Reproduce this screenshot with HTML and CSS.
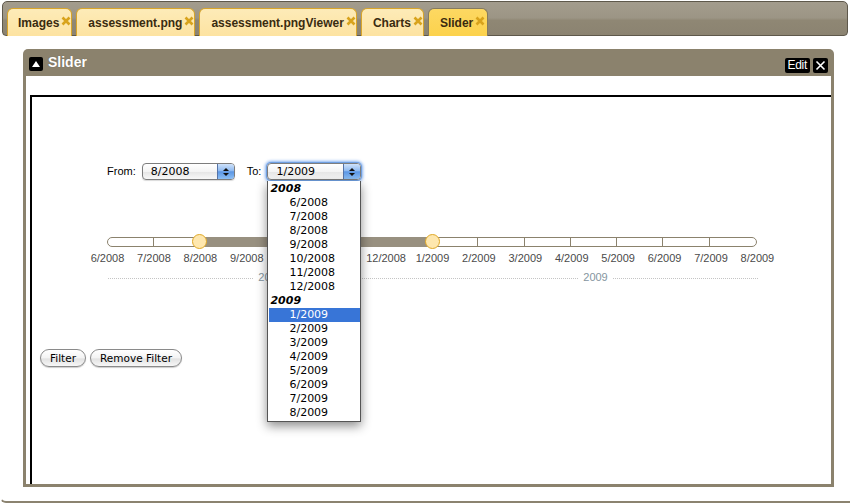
FILE: index.html
```html
<!DOCTYPE html>
<html>
<head>
<meta charset="utf-8">
<link rel="stylesheet" href="styles.css">
</head>
<body>
<div class="tabbar">
  <div class="tab">Images<svg class="x" viewBox="0 0 10 10"><path d="M1.5 1.5L8.5 8.5M8.5 1.5L1.5 8.5"/></svg></div>
  <div class="tab">assessment.png<svg class="x" viewBox="0 0 10 10"><path d="M1.5 1.5L8.5 8.5M8.5 1.5L1.5 8.5"/></svg></div>
  <div class="tab">assessment.pngViewer<svg class="x" viewBox="0 0 10 10"><path d="M1.5 1.5L8.5 8.5M8.5 1.5L1.5 8.5"/></svg></div>
  <div class="tab">Charts<svg class="x" viewBox="0 0 10 10"><path d="M1.5 1.5L8.5 8.5M8.5 1.5L1.5 8.5"/></svg></div>
  <div class="tab active">Slider<svg class="x" viewBox="0 0 10 10"><path d="M1.5 1.5L8.5 8.5M8.5 1.5L1.5 8.5"/></svg></div>
</div>
<div class="workspace">
  <div class="panel">
    <div class="panel-head">
      <span class="collapse"><svg viewBox="0 0 14 14"><path d="M3 10L7 4L11 10Z"/></svg></span>
      <span class="panel-title">Slider</span>
      <span class="spacer"></span>
      <span class="badge">Edit</span>
      <span class="badge close"><svg viewBox="0 0 15 15"><path d="M3.5 3.5L11.5 11.5M11.5 3.5L3.5 11.5"/></svg></span>
    </div>
    <div class="panel-body">
      <div class="canvas">
        <div class="range-form">
          <div class="pickers">
            <span class="label">From:</span>
            <div class="select"><span class="val">8/2008</span><span class="arrows"><i class="up"></i><i class="down"></i></span></div>
            <span class="label to">To:</span>
            <div class="select-wrap">
              <div class="select focus"><span class="val">1/2009</span><span class="arrows"><i class="up"></i><i class="down"></i></span></div>
              <div class="menu">
                <div class="group">2008</div>
                <div class="opt">6/2008</div>
                <div class="opt">7/2008</div>
                <div class="opt">8/2008</div>
                <div class="opt">9/2008</div>
                <div class="opt">10/2008</div>
                <div class="opt">11/2008</div>
                <div class="opt">12/2008</div>
                <div class="group">2009</div>
                <div class="opt sel">1/2009</div>
                <div class="opt">2/2009</div>
                <div class="opt">3/2009</div>
                <div class="opt">4/2009</div>
                <div class="opt">5/2009</div>
                <div class="opt">6/2009</div>
                <div class="opt">7/2009</div>
                <div class="opt">8/2009</div>
              </div>
            </div>
          </div>
          <div class="slider">
            <div class="rail">
              <div class="track">
                <span></span><span></span><span></span><span></span><span></span><span></span><span></span>
                <span></span><span></span><span></span><span></span><span></span><span></span><span></span>
              </div>
              <div class="fill" style="left:14.2857%;width:35.7143%"></div>
              <div class="handle" style="left:14.2857%"></div>
              <div class="handle" style="left:50%"></div>
            </div>
            <div class="ticks">
              <span>6/2008</span><span>7/2008</span><span>8/2008</span><span>9/2008</span><span>10/2008</span>
              <span>11/2008</span><span>12/2008</span><span>1/2009</span><span>2/2009</span><span>3/2009</span>
              <span>4/2009</span><span>5/2009</span><span>6/2009</span><span>7/2009</span><span>8/2009</span>
            </div>
            <div class="years">
              <div class="year"><span>2008</span></div>
              <div class="year"><span>2009</span></div>
            </div>
          </div>
        </div>
        <div class="actions">
          <button class="btn">Filter</button>
          <button class="btn">Remove Filter</button>
        </div>
      </div>
    </div>
  </div>
</div>
</body>
</html>
```

FILE: styles.css
```css
html, body {
  margin: 0;
  padding: 0;
  background: #fff;
  font-family: "Liberation Sans", Arial, sans-serif;
  overflow: hidden;
}

.tabbar {
  box-sizing: border-box;
  height: 35px;
  margin: 1px 2px 0 2px;
  border: 1px solid #5e584b;
  border-radius: 5px 5px 4px 4px;
  background: linear-gradient(to bottom, #a39c8d 0%, #9c9585 48%, #8f8774 56%, #8b8371 100%);
  display: flex;
  align-items: flex-end;
  gap: 4px;
  padding-left: 4px;
}

.tab {
  box-sizing: border-box;
  height: 28px;
  margin-bottom: -1px;
  display: flex;
  align-items: center;
  padding: 0 0 0 11px;
  gap: 2px;
  border: 1px solid #d9a52a;
  border-bottom: none;
  border-radius: 6px 6px 0 0;
  background: linear-gradient(to bottom, #fdebb8, #fde3a1);
  color: #3a2b10;
  font-weight: bold;
  font-size: 12px;
}

.tab:first-child {
  padding-left: 10px;
}

.tab.active {
  background: linear-gradient(to bottom, #fdd862, #fcd24c);
  border-color: #857a5f;
  padding-right: 2px;
}

.tab .x {
  width: 10px;
  height: 10px;
  margin-top: -4px;
}

.tab .x path {
  stroke: #d8a31c;
  stroke-width: 2.6;
  fill: none;
}

.workspace {
  box-sizing: border-box;
  height: 467px;
  padding: 13px 16px 13px 22px;
  border-bottom: 2px solid #8b8370;
  border-left: 1px solid #fff;
  border-bottom-left-radius: 6px;
}

.panel {
  display: flex;
  flex-direction: column;
  height: 438px;
}

.panel-head {
  flex: none;
  height: 27px;
  background: #8b826d;
  border-radius: 5px 5px 0 0;
  display: flex;
  align-items: center;
  padding: 0 6px;
  box-sizing: border-box;
}

.collapse {
  width: 14px;
  height: 14px;
  background: #000;
  border-radius: 2px;
  display: block;
  margin-top: 3px;
}

.collapse svg {
  display: block;
  width: 14px;
  height: 14px;
}

.collapse path {
  fill: #fff;
}

.panel-title {
  color: #fff;
  font-weight: bold;
  font-size: 14px;
  margin-left: 5px;
  margin-top: -2px;
  text-shadow: 0 0 1px rgba(0,0,0,.3);
}

.spacer {
  flex: 1;
}

.badge {
  background: #000;
  color: #fff;
  font-size: 12px;
  height: 15px;
  line-height: 15px;
  padding: 0 3px;
  border-radius: 2px;
  margin-top: 5px;
  letter-spacing: -0.3px;
}

.badge.close {
  margin-left: 3px;
  width: 15px;
  padding: 0;
}

.badge.close svg {
  display: block;
  width: 15px;
  height: 15px;
}

.badge.close path {
  stroke: #fff;
  stroke-width: 1.6;
}

.panel-body {
  flex: 1;
  box-sizing: border-box;
  border: 3px solid #8b826d;
  border-top: none;
  padding: 19px 0 0 4px;
  display: flex;
  flex-direction: column;
  overflow: hidden;
}

.canvas {
  flex: 1;
  border-top: 2px solid #000;
  border-left: 2px solid #000;
}

.range-form {
  margin-left: 75px;
  padding-top: 66px;
}

.pickers {
  display: flex;
  align-items: center;
  height: 17px;
}

.label {
  font-size: 11px;
  color: #000;
  margin-right: 6px;
  margin-top: -2px;
}

.label.to {
  margin-left: 12px;
}

.select-wrap {
  position: relative;
}

.select {
  box-sizing: border-box;
  width: 93px;
  height: 17px;
  border: 1px solid #7d7d7d;
  border-radius: 4px;
  background: linear-gradient(to bottom, #ffffff 0%, #f4f4f4 50%, #e6e6e6 55%, #f8f8f8 100%);
  display: flex;
  align-items: center;
  overflow: hidden;
  box-shadow: 0 1px 1px rgba(0,0,0,.15);
}

.select.focus {
  width: 94px;
  box-shadow: 0 0 0 1px #6f9fe0, 0 0 3px 2px rgba(90,150,235,.75);
}

.select .val {
  flex: 1;
  padding-left: 8px;
  font-family: "DejaVu Sans", Verdana, sans-serif;
  font-size: 11px;
  color: #000;
}

.arrows {
  width: 16px;
  height: 100%;
  border-left: 1px solid #5674a8;
  background: linear-gradient(to bottom, #cfe2fa 0%, #8fbaf0 45%, #5b96e4 52%, #8dc0f6 100%);
  display: flex;
  flex-direction: column;
  align-items: center;
  justify-content: center;
  gap: 2px;
}

.arrows i {
  width: 0;
  height: 0;
  border-left: 3px solid transparent;
  border-right: 3px solid transparent;
}

.arrows .up {
  border-bottom: 3px solid #111;
}

.arrows .down {
  border-top: 3px solid #111;
}

.menu {
  position: absolute;
  top: 18px;
  left: 0;
  width: 94px;
  box-sizing: border-box;
  background: #fff;
  border: 1px solid #555;
  border-top: none;
  padding: 1px 0 1px 1px;
  box-shadow: 0 4px 10px rgba(0,0,0,.45);
  font-family: "DejaVu Sans", Verdana, sans-serif;
  font-size: 11px;
  color: #000;
  z-index: 5;
}

.group {
  height: 14px;
  line-height: 14px;
  font-weight: bold;
  font-style: italic;
  padding-left: 1px;
}

.opt {
  height: 14px;
  line-height: 14px;
  padding-left: 20px;
}

.opt.sel {
  background: #3875d7;
  color: #fff;
}

.slider {
  width: 650px;
  margin-top: 54px;
}

.rail {
  position: relative;
  height: 16px;
}

.track {
  position: absolute;
  left: 0;
  right: 0;
  top: 3px;
  height: 10px;
  box-sizing: border-box;
  border: 1px solid #8b826d;
  border-radius: 5px;
  background: #fff;
  display: grid;
  grid-template-columns: repeat(14, 1fr);
}

.track span {
  border-right: 1px solid #8b826d;
}

.track span:last-child {
  border-right: none;
}

.fill {
  position: absolute;
  top: 3px;
  height: 10px;
  background: #989080;
}

.handle {
  position: absolute;
  top: 0;
  width: 15px;
  height: 15px;
  box-sizing: border-box;
  margin-left: -7.5px;
  border: 1px solid #e0a826;
  border-radius: 50%;
  background: #fee7ae;
}

.ticks {
  display: grid;
  grid-template-columns: repeat(15, 46.43px);
  margin-left: -22.7px;
  margin-top: 2px;
  font-size: 11px;
  line-height: 13px;
  color: #4a4a4a;
  text-align: center;
  white-space: nowrap;
}

.years {
  display: grid;
  grid-template-columns: 325px 325px;
  margin-top: 6px;
  margin-left: 1px;
  font-size: 11px;
  line-height: 13px;
  color: #8595a0;
}

.year {
  display: flex;
  align-items: center;
}

.year::before,
.year::after {
  content: "";
  flex: 1;
  border-top: 1px dotted #c4c4c4;
  margin-top: 2px;
}

.year span {
  margin: 0 5px;
}

.actions {
  display: flex;
  gap: 4px;
  margin: 65px 0 0 8px;
}

.btn {
  box-sizing: border-box;
  height: 18px;
  padding: 0 9px;
  border: 1px solid #8a8a8a;
  border-radius: 9px;
  background: linear-gradient(to bottom, #ffffff 0%, #f3f3f3 50%, #e2e2e2 55%, #f7f7f7 100%);
  box-shadow: 0 1px 1px rgba(0,0,0,.2);
  font-family: "DejaVu Sans", Verdana, sans-serif;
  font-size: 10.5px;
  color: #000;
  line-height: 16px;
}
```
